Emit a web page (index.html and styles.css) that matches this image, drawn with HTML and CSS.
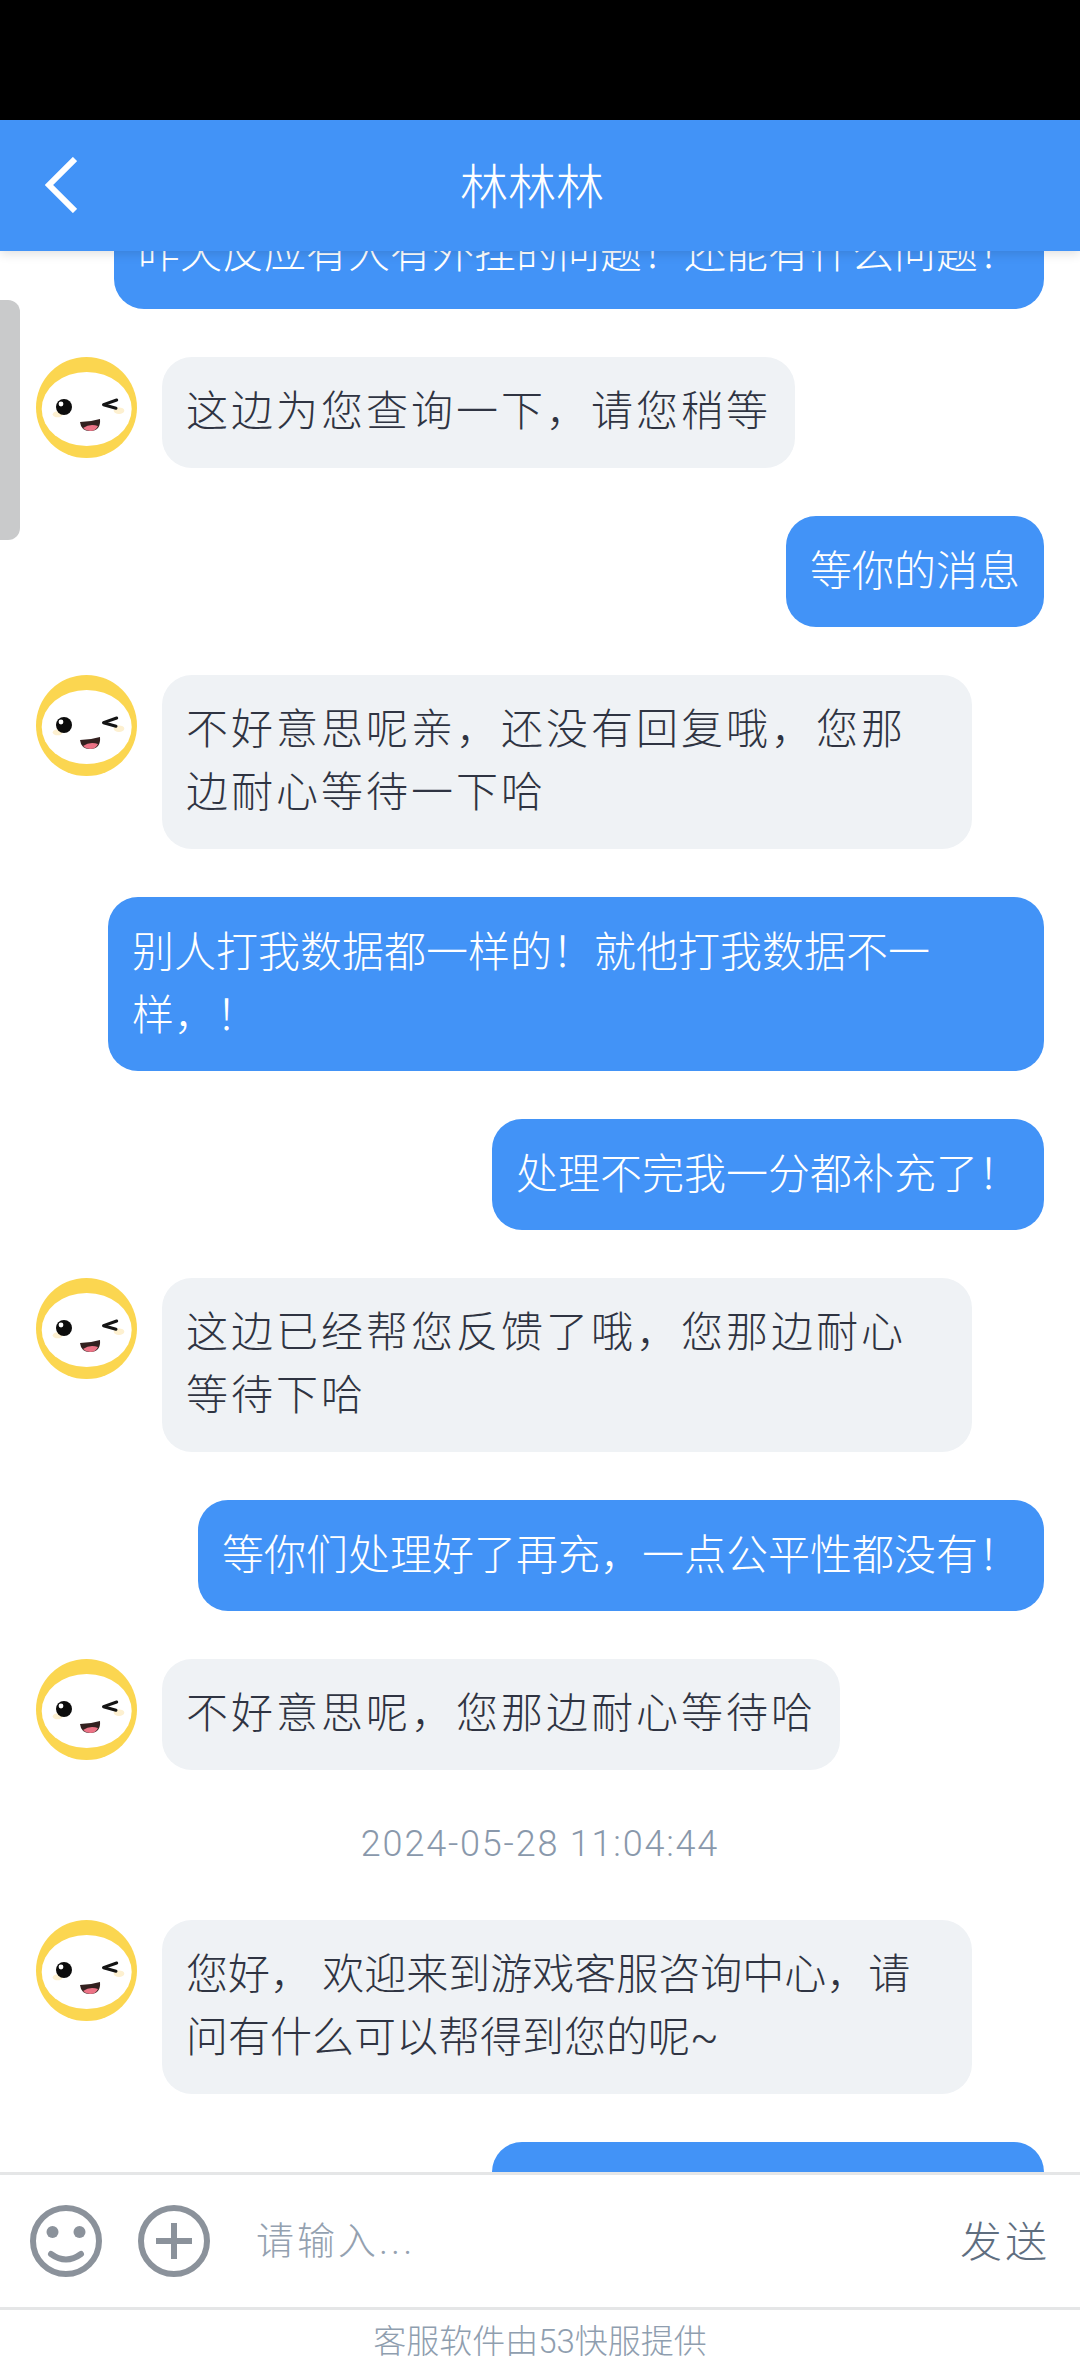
FILE: index.html
```html
<!DOCTYPE html>
<html lang="zh-CN">
<head>
    <meta charset="UTF-8">
    <meta name="viewport" content="width=device-width, initial-scale=1.0">
    <title>林林林</title>
    <link rel="stylesheet" href="styles.css">
</head>
<body>
    <svg class="defs" width="0" height="0">
        <symbol id="face" viewBox="0 0 101 101">
            <circle cx="50.5" cy="50.5" r="50.5" fill="#fbd650"/>
            <ellipse cx="50.7" cy="52" rx="45" ry="37" fill="#fff"/>
            <ellipse cx="21.7" cy="57.3" rx="5" ry="3" fill="#fdf0d0"/>
            <ellipse cx="83" cy="53.7" rx="5.3" ry="3.3" fill="#fdf0d0"/>
            <circle cx="28" cy="50" r="8" fill="#0c0c0c"/>
            <circle cx="25" cy="47" r="2.4" fill="#fff"/>
            <path d="M80.7 43L67.5 47.7L80 51.3" fill="none" stroke="#141414" stroke-width="3" stroke-linecap="round" stroke-linejoin="round"/>
            <path d="M44 65Q54 65 64 62Q65 74 54 74Q45 74 44 65Z" fill="#33201f"/>
            <path d="M47 71Q54 66 62 69Q60 74 54 74Q50 74 47 71Z" fill="#ec7386"/>
        </symbol>
    </svg>

    <div class="status-bar"></div>

    <header class="top-bar">
        <svg class="back" width="32" height="56" viewBox="0 0 32 56">
            <path d="M30 2L4 28L30 54" fill="none" stroke="#fff" stroke-width="6"/>
        </svg>
        <h1>林林林</h1>
    </header>

    <div class="scroll-thumb"></div>

    <main class="chat">
        <div class="list">
            <div class="msg me"><p class="bubble">昨天反应有人有外挂的问题！还能有什么问题！</p></div>
            <div class="msg">
                <svg class="avatar"><use href="#face"/></svg>
                <p class="bubble">这边为您查询一下，请您稍等</p>
            </div>
            <div class="msg me"><p class="bubble">等你的消息</p></div>
            <div class="msg">
                <svg class="avatar"><use href="#face"/></svg>
                <p class="bubble">不好意思呢亲，还没有回复哦，您那边耐心等待一下哈</p>
            </div>
            <div class="msg me"><p class="bubble">别人打我数据都一样的！就他打我数据不一样，！</p></div>
            <div class="msg me"><p class="bubble">处理不完我一分都补充了！</p></div>
            <div class="msg">
                <svg class="avatar"><use href="#face"/></svg>
                <p class="bubble">这边已经帮您反馈了哦，您那边耐心等待下哈</p>
            </div>
            <div class="msg me"><p class="bubble">等你们处理好了再充，一点公平性都没有！</p></div>
            <div class="msg">
                <svg class="avatar"><use href="#face"/></svg>
                <p class="bubble">不好意思呢，您那边耐心等待哈</p>
            </div>
            <div class="time">2024-05-28 11:04:44</div>
            <div class="msg">
                <svg class="avatar"><use href="#face"/></svg>
                <p class="bubble welcome">您好， 欢迎来到游戏客服咨询中心，请问有什么可以帮得到您的呢~</p>
            </div>
            <div class="msg me"><p class="bubble">处理不完我一分都补充了！</p></div>
        </div>
    </main>

    <footer class="input-bar">
        <svg class="tool" width="72" height="72" viewBox="0 0 72 72">
            <circle cx="36" cy="36" r="33" fill="none" stroke="#8b929b" stroke-width="6"/>
            <circle cx="22.5" cy="27" r="6" fill="#8b929b"/>
            <circle cx="49.5" cy="27" r="6" fill="#8b929b"/>
            <path d="M21 49Q36 60 51 49" fill="none" stroke="#8b929b" stroke-width="6" stroke-linecap="round"/>
        </svg>
        <svg class="tool" width="72" height="72" viewBox="0 0 72 72">
            <circle cx="36" cy="36" r="33" fill="none" stroke="#8b929b" stroke-width="6"/>
            <path d="M18 36H54M36 18V54" fill="none" stroke="#8b929b" stroke-width="6"/>
        </svg>
        <input class="msg-input" type="text" placeholder="请输入...">
        <button class="send">发送</button>
    </footer>

    <div class="credit">客服软件由53快服提供</div>
</body>
</html>
```

FILE: styles.css
```css
* {
    box-sizing: border-box;
}
html, body {
    height: 100%;
}
body {
    margin: 0;
    display: flex;
    flex-direction: column;
    overflow: hidden;
    position: relative;
    background: #fff;
    font-family: Roboto, "Noto Sans CJK SC", sans-serif;
    font-weight: 300;
    color: #2f3442;
}
.defs {
    position: absolute;
}
.status-bar {
    height: 120px;
    flex-shrink: 0;
    background: #000;
}
.top-bar {
    height: 131px;
    flex-shrink: 0;
    display: flex;
    align-items: center;
    justify-content: center;
    position: relative;
    z-index: 2;
    background: #4293f7;
    box-shadow: 0 3px 10px rgba(0, 0, 0, 0.12);
}
.top-bar h1 {
    margin: 0 16px 6px 0;
    font-size: 48px;
    font-weight: 300;
    color: #fff;
}
.back {
    position: absolute;
    left: 45px;
    top: 37px;
}
.scroll-thumb {
    position: absolute;
    left: 0;
    top: 300px;
    width: 20px;
    height: 240px;
    z-index: 1;
    background: #c9cacb;
    border-radius: 0 12px 12px 0;
}
.chat {
    flex: 1;
    min-height: 0;
    overflow: hidden;
}
.list {
    margin-top: -53px;
    padding: 0 36px;
    display: flex;
    flex-direction: column;
    gap: 48px;
}
.msg {
    display: flex;
    align-items: flex-start;
    gap: 25px;
}
.msg.me {
    justify-content: flex-end;
}
.avatar {
    width: 101px;
    height: 101px;
    flex-shrink: 0;
}
.bubble {
    margin: 0;
    max-width: 810px;
    padding: 23px 24px 25px;
    font-size: 42px;
    line-height: 63px;
    letter-spacing: 3px;
    border-radius: 30px;
    background: #eff2f5;
}
.bubble.welcome {
    letter-spacing: 0;
}
.me .bubble {
    max-width: 936px;
    padding: 24px;
    letter-spacing: 0;
    color: #fff;
    background: #4293f7;
}
.time {
    height: 54px;
    line-height: 52px;
    text-align: center;
    font-size: 36px;
    letter-spacing: 1.8px;
    color: #8998ab;
}
.input-bar {
    height: 138px;
    flex-shrink: 0;
    display: flex;
    align-items: center;
    padding: 0 30px;
    gap: 36px;
    position: relative;
    z-index: 2;
    background: #fff;
    border-top: 3px solid #e5e6e7;
    border-bottom: 3px solid #e5e6e7;
}
.msg-input {
    flex: 1;
    min-width: 0;
    margin-left: 10px;
    padding: 0;
    border: none;
    outline: none;
    background: none;
    font: inherit;
    font-size: 38px;
    letter-spacing: 3px;
}
.msg-input::placeholder {
    color: #94a1b0;
}
.send {
    margin-bottom: 6px;
    padding: 0;
    border: none;
    background: none;
    font: inherit;
    font-size: 42px;
    letter-spacing: 3px;
    color: #5f6e7f;
}
.credit {
    height: 66px;
    flex-shrink: 0;
    line-height: 64px;
    text-align: center;
    font-size: 33px;
    color: #8f9eaf;
}
```
